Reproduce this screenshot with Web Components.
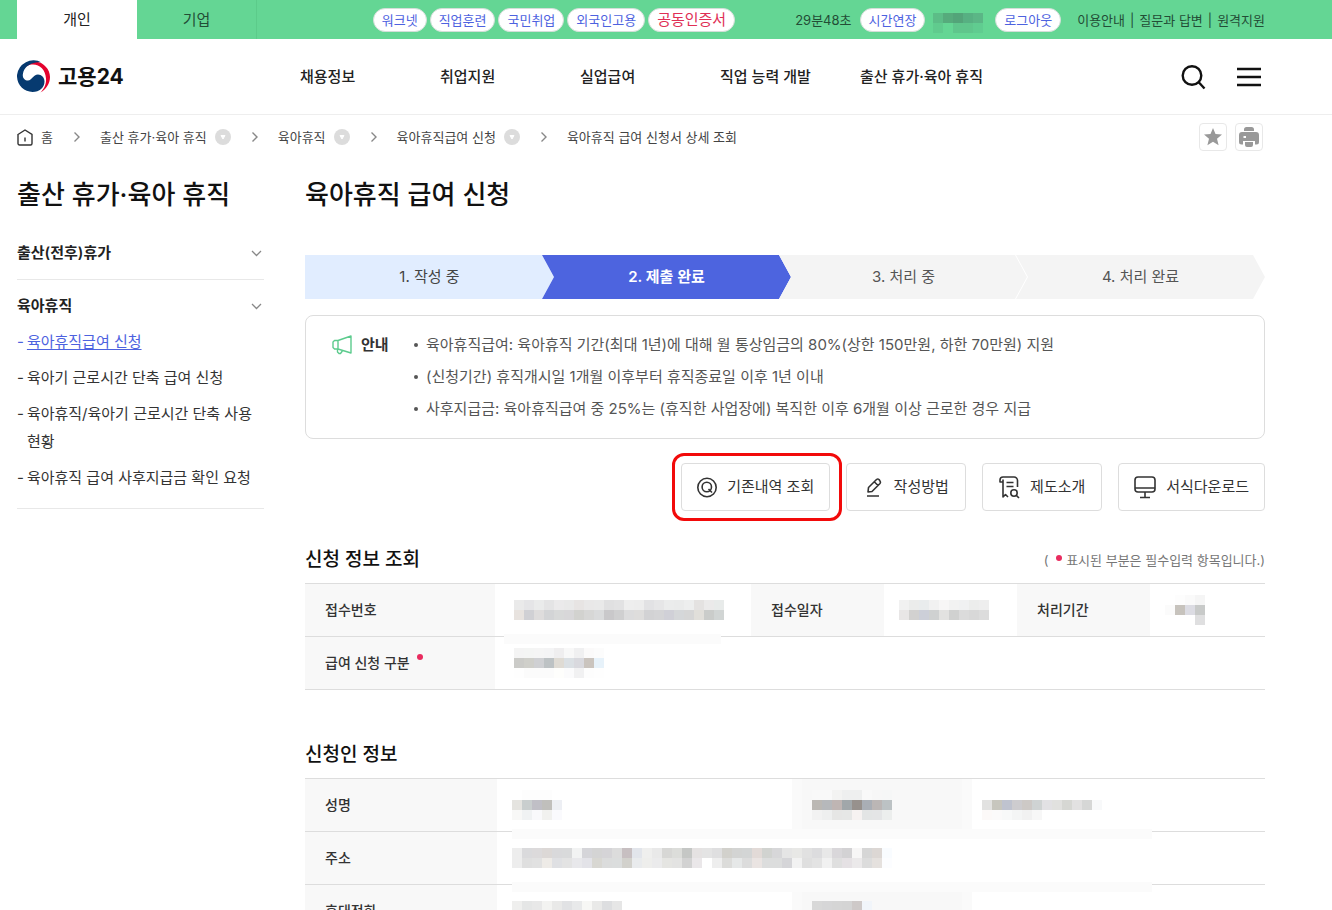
<!DOCTYPE html>
<html lang="ko">
<head>
<meta charset="utf-8">
<meta name="viewport" content="width=device-width, initial-scale=1">
<title>육아휴직 급여 신청 - 고용24</title>
<style>
  html, body { margin: 0; background: #fff; }
  body { font-family: Inter, "Noto Sans CJK KR", sans-serif; font-size: 15px; line-height: 20px; color: #333; }
</style>
</head>
<body>
<work-page></work-page>

<script>
const base = `
  *, *::before, *::after { box-sizing: border-box; }
  :host { display: block; box-sizing: border-box; }
  a { color: inherit; text-decoration: none; }
  button { font: inherit; color: inherit; cursor: pointer; }
  ul, ol { list-style: none; margin: 0; padding: 0; }
  h1, h2, h3, p { margin: 0; }
  svg { display: block; flex: none; }
`;

function define(name, css, html) {
  const tpl = document.createElement('template');
  tpl.innerHTML = `<style>${base}${css}</style>${html}`;
  customElements.define(name, class extends HTMLElement {
    constructor() {
      super();
      this.attachShadow({ mode: 'open' }).append(tpl.content.cloneNode(true));
    }
  });
}

/* Masked personal data: rows split by "/", one hex colour per 10px cell, "-" leaves a cell clear. */
customElements.define('masked-value', class extends HTMLElement {
  connectedCallback() {
    if (this.shadowRoot) return;
    const rows = this.getAttribute('cells').split('/').map(r => r.trim().split(/\s+/));
    const w = Math.max(...rows.map(r => r.length)) * 10, h = rows.length * 10;
    const rects = rows.map((r, y) => r.map((c, x) =>
      c === '-' ? '' : `<rect x="${x * 10}" y="${y * 10}" width="10" height="10" fill="#${c}"/>`).join('')).join('');
    this.attachShadow({ mode: 'open' }).innerHTML =
      `<style>:host{display:block}svg{display:block}</style>
       <svg width="${w}" height="${h}" shape-rendering="crispEdges" aria-hidden="true">${rects}</svg>`;
  }
});

define('pill-button', `
  :host { display: inline-block; color: #4d62df; font-size: 13px; }
  :host([alert]) { color: #e02f55; font-size: 15px; }
  button { display: block; height: 24px; padding: 0 8px; border: 1px solid #d5ded9; border-radius: 12px; background: #fff; line-height: 20px; white-space: nowrap; }
`, `<button type="button"><slot></slot></button>`);

define('top-bar', `
  :host { background: #64d694; color: #234d36; }
  .row { display: flex; justify-content: space-between; height: 39px; padding: 0 67px 0 17px; }
  .tabs { display: flex; }
  .tabs a { width: 120px; text-align: center; line-height: 40px; border-right: 1px solid #5ccb8a; }
  .tabs a.on { background: #fff; color: #222; border: 0; }
  .right, .sites, .util { display: flex; align-items: center; white-space: nowrap; font-size: 13px; }
  .sites { gap: 3px; margin-right: 60px; }
  .session { display: flex; align-items: center; gap: 8px; margin-right: 16px; }
  .session masked-value { margin: 7px 4px 0 0; }
  .util { gap: 5px; }
`, `
  <div class="row">
    <nav class="tabs"><a class="on" href="#">개인</a><a href="#">기업</a></nav>
    <div class="right">
      <div class="sites">
        <pill-button>워크넷</pill-button><pill-button>직업훈련</pill-button><pill-button>국민취업</pill-button><pill-button>외국인고용</pill-button><pill-button alert>공동인증서</pill-button>
      </div>
      <div class="session">
        <span class="time">29분48초</span><pill-button>시간연장</pill-button>
        <masked-value cells="5cbd87 56ab7c 53a479 57b082 5bb686/60cb8e 64d694 5fc68c 5fc68c 60cc90"></masked-value>
        <pill-button>로그아웃</pill-button>
      </div>
      <nav class="util"><a href="#">이용안내</a><span>|</span><a href="#">질문과 답변</a><span>|</span><a href="#">원격지원</a></nav>
    </div>
  </div>`);

define('site-header', `
  :host { border-bottom: 1px solid #eee; color: #222; }
  .row { display: flex; align-items: center; height: 75px; padding: 0 71px 0 17px; }
  .logo { display: flex; align-items: center; gap: 8px; width: 283px; font-size: 21px; font-weight: 700; color: #111; }
  nav { display: grid; grid-auto-flow: column; grid-auto-columns: 140px; flex: 1; font-weight: 500; white-space: nowrap; }
  .tools { display: flex; gap: 30px; }
  .tools button { padding: 0; border: 0; background: none; }
`, `
  <div class="row">
    <a class="logo" href="#">
      <svg width="33" height="33" viewBox="0 0 33 33" aria-hidden="true">
        <path d="M4 9C7 3 13 0.500 19 1.500c8 1.200 14 8 14 15.500 0 6.500-4 12.500-9.500 15.500 4-4 6-9 5.500-14C28.500 10 23 4.500 16 4.500 12 4.500 8 6.500 6 10Z" fill="#e4032e"/>
        <path d="M24.500 2.500A16.500 16.500 0 0 0 0 15c-.5 10 7 17 15.500 17C22.500 32 27.500 27.500 27.500 21.500c0-4-3-7-6.500-7-5 0-6 6-10 6-3.500 0-6-3-5-7C7 8 11 4.500 16 3.200c3-1 6-1.200 8.500-.7Z" fill="#063a70"/>
      </svg>
      <span>고용24</span>
    </a>
    <nav><a href="#">채용정보</a><a href="#">취업지원</a><a href="#">실업급여</a><a href="#">직업 능력 개발</a><a href="#">출산 휴가·육아 휴직</a></nav>
    <div class="tools">
      <button type="button" aria-label="검색"><svg width="26" height="26" viewBox="0 0 26 26" fill="none" stroke="#111" stroke-width="2.400"><circle cx="11" cy="11.500" r="9.300"/><path d="m17.500 18 6 6.500"/></svg></button>
      <button type="button" aria-label="전체메뉴"><svg width="24" height="26" viewBox="0 0 24 26" fill="none" stroke="#111" stroke-width="2.400"><path d="M0 5h24M0 13h24M0 21h24"/></svg></button>
    </div>
  </div>`);

define('crumb-item', `
  :host { display: flex; align-items: center; gap: 8px; }
  :host([home]) svg.go, :host([home]) button, :host([last]) button { display: none; }
  svg.go { margin: 0 11px 0 12px; }
  button { padding: 0; border: 0; width: 16px; height: 16px; border-radius: 50%; background: #dcdcdc; }
`, `
  <svg class="go" width="8" height="12" viewBox="0 0 8 12" fill="none" stroke="#888" stroke-width="1.400"><path d="m1.500 1.500 4.500 4.500-4.500 4.500"/></svg>
  <slot></slot>
  <button type="button" aria-label="하위 메뉴"><svg width="16" height="16" viewBox="0 0 16 16"><path d="M6 6.500h4L8 10Z" fill="#fff" stroke="#fff" stroke-linejoin="round"/></svg></button>`);

define('bread-crumb', `
  .row { display: flex; align-items: center; justify-content: space-between; height: 44px; padding: 0 69px 0 17px; font-size: 13px; color: #444; }
  .path { display: flex; align-items: center; gap: 8px; white-space: nowrap; }
  .tools { display: flex; gap: 8px; }
  .tools button { display: grid; place-items: center; width: 28px; height: 28px; padding: 0; border: 1px solid #e8e8e8; border-radius: 4px; background: #fff; }
`, `
  <div class="row">
    <nav class="path">
      <crumb-item home><svg width="16" height="17" viewBox="0 0 16 17" fill="none" stroke="#333" stroke-width="1.400"><path d="M1 5.500 8 1l7 4.500V14.500a1.500 1.500 0 0 1-1.500 1.500h-11A1.500 1.500 0 0 1 1 14.500ZM8 8.500V12.500"/></svg><a href="#">홈</a></crumb-item>
      <crumb-item><a href="#">출산 휴가·육아 휴직</a></crumb-item>
      <crumb-item><a href="#">육아휴직</a></crumb-item>
      <crumb-item><a href="#">육아휴직급여 신청</a></crumb-item>
      <crumb-item last><span>육아휴직 급여 신청서 상세 조회</span></crumb-item>
    </nav>
    <div class="tools">
      <button type="button" aria-label="즐겨찾기"><svg width="20" height="20" viewBox="0 0 20 20"><path d="m10 1 2.500 6 6.500.5-5 4.300 1.600 6.400L10 14.700l-5.600 3.500L6 11.800 1 7.500 7.500 7Z" fill="#999"/></svg></button>
      <button type="button" aria-label="인쇄"><svg width="20" height="20" viewBox="0 0 20 20"><path d="M5 4V2.500A2.500 2.500 0 0 1 7.500 0h5A2.500 2.500 0 0 1 15 2.500V4ZM3 5h14a3 3 0 0 1 3 3v7a2.500 2.500 0 0 1-2.500 2.500H16V14H4v3.500H2.500A2.500 2.500 0 0 1 0 15V8a3 3 0 0 1 3-3Zm1.500 4v2h2.500v-2ZM6 15h8v3a2 2 0 0 1-2 2H8a2 2 0 0 1-2-2Z" fill="#999" fill-rule="evenodd"/></svg></button>
    </div>
  </div>`);

define('menu-group', `
  :host { padding: 12px 0; border-bottom: 1px solid #e8e8e8; }
  h3 { display: flex; align-items: center; justify-content: space-between; padding-right: 2px; font-size: 15px; line-height: 28px; font-weight: 600; color: #222; }
`, `
  <h3><slot name="title"></slot><svg width="11" height="7" viewBox="0 0 11 7" fill="none" stroke="#888" stroke-width="1.300"><path d="m1 1 4.500 4.500L10 1"/></svg></h3>
  <slot></slot>`);

define('side-menu', `
  h2 { margin-bottom: 14px; font-size: 26px; line-height: 36px; font-weight: 500; color: #111; white-space: nowrap; }
  ul { display: grid; gap: 8px; padding: 8px 0 4px; line-height: 28px; }
  li { display: flex; gap: 3px; }
  li::before { content: "-"; }
  li.on { color: #4d62df; }
  li.on a { text-decoration: underline; text-underline-offset: 2px; }
`, `
  <h2>출산 휴가·육아 휴직</h2>
  <menu-group><span slot="title">출산(전후)휴가</span></menu-group>
  <menu-group><span slot="title">육아휴직</span>
    <ul>
      <li class="on"><a href="#">육아휴직급여 신청</a></li>
      <li><a href="#">육아기 근로시간 단축 급여 신청</a></li>
      <li><a href="#">육아휴직/육아기 근로시간 단축 사용 현황</a></li>
      <li><a href="#">육아휴직 급여 사후지급금 확인 요청</a></li>
    </ul>
  </menu-group>`);

define('step-bar', `
  ol { display: grid; grid-template-columns: repeat(4, 1fr); padding-right: 12px; }
  li { margin-right: -12px; height: 44px; line-height: 44px; text-align: center; color: #555; background: #f4f4f4;
       clip-path: polygon(0 0, calc(100% - 12px) 0, 100% 50%, calc(100% - 12px) 100%, 0 100%, 12px 50%); }
  li:first-child { background: #e1edff; color: #444; clip-path: polygon(0 0, calc(100% - 12px) 0, 100% 50%, calc(100% - 12px) 100%, 0 100%); }
  li.now { background: #4d64df; color: #fff; font-weight: 600; }
  li:nth-child(3) { clip-path: polygon(0 0, calc(100% - 13px) 0, calc(100% - 1px) 50%, calc(100% - 13px) 100%, 0 100%, 12px 50%); }
`, `<ol><li>1. 작성 중</li><li class="now" aria-current="step">2. 제출 완료</li><li>3. 처리 중</li><li>4. 처리 완료</li></ol>`);

define('notice-box', `
  :host { display: flex; padding: 13px 26px; border: 1px solid #ddd; border-radius: 8px; line-height: 32px; color: #555; }
  .head { display: flex; align-items: center; gap: 9px; height: 32px; width: 82px; font-weight: 600; color: #333; }
  ::slotted(ul) { list-style: none; margin: 0; padding: 0; }
`, `
  <div class="head"><svg width="20" height="20" viewBox="0 0 20 20" fill="none" stroke="#5ccb8d" stroke-width="1.400" stroke-linejoin="round"><path d="M6 5.500 19 1v17L6 14ZM6 5.500H2.500L1 7v5.500L2.500 14H6ZM5.500 14v3l1.500 1.500h1.500l1.500-2v-1"/></svg><slot name="title"></slot></div>
  <slot></slot>`);

define('tool-button', `
  :host { position: relative; }
  button { display: flex; align-items: center; justify-content: center; gap: 10px; min-width: 120px; height: 48px; padding: 0 15px; border: 1px solid #ddd; border-radius: 4px; background: #fff; color: #333; white-space: nowrap; }
  :host([highlight])::after { content: ""; position: absolute; inset: -10px -12px -10px -9px; border: 3px solid #f20a0a; border-radius: 12px; pointer-events: none; }
`, `<button type="button"><slot name="icon"></slot><slot></slot></button>`);

define('section-head', `
  :host { display: flex; align-items: center; justify-content: space-between; margin-bottom: 9px; }
  h2 { font-size: 19px; line-height: 28px; font-weight: 500; color: #111; }
  p { font-size: 13px; color: #777; }
`, `<h2><slot></slot></h2><p><slot name="note"></slot></p>`);

define('required-dot', `
  :host { display: inline-block; width: 6px; height: 6px; margin: 0 4px; border-radius: 50%; background: #e92c5f; vertical-align: 4px; }
  :host([raised]) { vertical-align: 8px; }
`, ``);

const tableCss = `
  table { width: 100%; table-layout: fixed; border-collapse: separate; border-spacing: 0; border-top: 1px solid #ddd; font-size: 14px; }
  th, td { position: relative; height: 53px; padding: 0 10px 0 15px; border-bottom: 1px solid #ddd; text-align: left; line-height: 20px; }
  th { padding: 0 0 0 20px; background: #f8f8f8; color: #333; font-weight: 500; }
  .veil { position: absolute; z-index: 1; left: 15px; top: calc(100% - 2px); height: 10px; background: #fbfbfb; }
`;

define('receipt-table', tableCss + `
  .lead { padding-left: 19px; }
  .lead .veil { left: 9px; width: 217px; }
`, `
  <table>
    <colgroup><col style="width:190px"><col><col style="width:133px"><col style="width:133px"><col style="width:133px"><col style="width:115px"></colgroup>
    <tr>
      <th scope="row">접수번호</th>
      <td class="lead"><masked-value cells="eaeaea e5e5e7 eaebeb e4e4e5 ebeaeb e9e9e9 e7e4e3 e9e8e8 e9e9e9 e0e0e1 e2e2e3 eeeeee ededed e2e2e4 e6e6e7 ebecec eaebeb edeeee e4e2e1 ebeaea e8ebea/e8e3df d0d0d4 dedcdc d3d4d6 d8d9d9 d8d7d9 d2d2cf d7d7d6 dadbdc c9c8ca cfcfd0 dcdcdd dedddc d2d2d4 d4d4d6 d0d0d7 d5d7d9 d6d6d6 e1dfda caccca d1d5d4"></masked-value><span class="veil"></span></td>
      <th scope="row">접수일자</th>
      <td><masked-value cells="f1f1f1 ebeceb e9eced f1f1f1 f7f6f6 f2f2f2 f0f1f2 ecedec eeeeee/e8e6e6 d2d1d0 cccfd8 cfd1d1 e2e2e0 d0d1d0 dbdbdb d8d8d8 dcdcdc"></masked-value></td>
      <th scope="row">처리기간</th>
      <td><masked-value cells="- fdfdfd fafafa f5f5f5/fbfbfb c7c3bd dcdce3 c8cac9/- - - dfdfe0"></masked-value></td>
    </tr>
    <tr>
      <th scope="row">급여 신청 구분 <required-dot raised></required-dot></th>
      <td class="lead" colspan="5"><masked-value cells="f4f4f4 f4f5f4 f5f5f5 f4f4f5 efeeef f8f8f8 f0f0f1 fbfafa fcfcfc/cbcbc8 cfcfca cfd0d3 bdc2c4 dfdbd4 dbe0e4 d9d9de cac4be e7f2fa/fefefe fbfbfb fbfbfb fbfbfb fefefc fbfbfc f1f1f2 fdfdfd fefefe"></masked-value></td>
    </tr>
  </table>`);

define('applicant-table', tableCss + `
  .veil { width: 640px; }
  th.masked { background: linear-gradient(90deg, #fafafa 10px, #f8f8f8 10px, #f8f8f8 170px, #fafafa 170px); }
  .masked + td { padding-left: 10px; }
`, `
  <table>
    <colgroup><col style="width:192px"><col><col style="width:180px"><col style="width:293px"></colgroup>
    <tr>
      <th scope="row">성명</th>
      <td><masked-value cells="- fdfdfd fdfdfd fdfdfd -/e5e4e0 c9cece c0bfc6 c0bfbc edeff4/f8f8f7 f0f2f3 f9f9fb f1f1ef fafafd"></masked-value><span class="veil"></span></td>
      <th class="masked" scope="row"><masked-value cells="f9f9f9 f9f9f9 f3f3f2 eeefef eeefef f9f9f9 f7f7f7 f6f7f7/bbb8b4 b6b8bb bfb5b3 a1a7aa 97918d a9aeb5 bbb6b5 bcc2c4/f2f2f2 eeefef e6e6e5 e6e7e6 f6f2f1 e3e5e5 e4e5e6 eceeed"></masked-value></th>
      <td><masked-value cells="-/e2e2e1 c7c6be bfc3cf cdcccf cdc9c6 cfd3d3 e2e1e4 e1e1df d6d7d3 e2e1e1 d6d7d6 f8f9fa/fcf9f8 fbfafa f8f9f9 f4f5f5 f1f1f1 f7f7f7"></masked-value></td>
    </tr>
    <tr>
      <th scope="row">주소</th>
      <td colspan="3"><masked-value cells="ededed dadadc dcdadb dcd8d6 d9d9db d9dadb f2f3f3 d5d5d9 d4d4d4 d5d4d7 dcdcdc c7bfc1 e2e5eb efefee e9e9e9 d7d7d5 dcddda c5c7c5 e5e2e2 e4e4e4 dfdfe0 d2d1cc d3d4d3 d3d5d5 e2dad7 d1d3d0 d7d7d9 e5e5e5 e8e8e6 e1e1e1 dcdcde e8e8e8 d9d7da d3d2d4 f7f6f6 d6d6d6 dcd7d4 f9fcff/ededed dfdfdf e1e1e1 eeebe7 dfe0e3 e3e3e3 e8e8eb e3e3e8 d8d7d2 dbdcdc dbdddd d2d1cc e9ebed eeeeec ebebec e5e5e2 e3e3e2 d2d2d2 eae7e9 ffffff eeeeee dcdcda e6e8e8 dcdcdc eae4e2 dcdddd dcdddd d5d5d8 f2f2f2 dfdfdf e3e3e3 f1f1f1 dfdfdf e5e1e4 ebe9ea dcdcdc e5e1de fcfdff"></masked-value><span class="veil"></span></td>
    </tr>
    <tr>
      <th scope="row">휴대전화</th>
      <td><masked-value cells="efefee e5e6e6 e8e8e8 f3f3f1 e9e9e8 e1e2e4 e8e9ea f7f7f5 e9e9e8 dddee0 e6e6e6/c9c9c9 d0d0d2 cfcfcf dddddb d2d2d0 c8c9cc d0d1d3 e3e3e0 d2d2d0 c5c6c9 cecece"></masked-value></td>
      <th class="masked" scope="row"><masked-value cells="d8d8d8 d6d6d7 d5d5d5 d4d4d4 cec9c8 f1f5fa/97989d b5b5b2 b0b0b0 a6a8b0 b5aaa7 e0e6ee"></masked-value></th>
      <td></td>
    </tr>
  </table>`);

define('work-page', `
  .body { display: grid; grid-template-columns: 247px minmax(0, 1fr); column-gap: 41px; align-items: start; padding: 18px 67px 0 17px; }
  h1 { margin-bottom: 42px; font-size: 26px; line-height: 36px; font-weight: 500; color: #111; }
  notice-box { margin: 16px 0 24px; }
  .guide li { display: flex; gap: 8px; }
  .guide li::before { content: ""; width: 4px; height: 4px; margin-top: 14px; border-radius: 50%; background: #555; }
  .actions { display: flex; justify-content: flex-end; gap: 16px; margin-bottom: 35px; }
  receipt-table { margin-bottom: 51px; }
`, `
  <top-bar></top-bar>
  <site-header></site-header>
  <bread-crumb></bread-crumb>
  <div class="body">
    <side-menu></side-menu>
    <main>
      <h1>육아휴직 급여 신청</h1>
      <step-bar></step-bar>
      <notice-box><span slot="title">안내</span>
        <ul class="guide">
          <li>육아휴직급여: 육아휴직 기간(최대 1년)에 대해 월 통상임금의 80%(상한 150만원, 하한 70만원) 지원</li>
          <li>(신청기간) 휴직개시일 1개월 이후부터 휴직종료일 이후 1년 이내</li>
          <li>사후지급금: 육아휴직급여 중 25%는 (휴직한 사업장에) 복직한 이후 6개월 이상 근로한 경우 지급</li>
        </ul>
      </notice-box>
      <div class="actions">
        <tool-button highlight><svg slot="icon" width="20" height="21" viewBox="0 0 20 21" fill="none" stroke="#333" stroke-width="1.600"><circle cx="10" cy="10.500" r="9.200"/><circle cx="9.800" cy="10" r="4.700"/><path d="m11.500 12 3.500 3.500"/></svg>기존내역 조회</tool-button>
        <tool-button><svg slot="icon" width="20" height="20" viewBox="0 0 20 20" fill="none" stroke="#333" stroke-width="1.600" stroke-linejoin="round"><path d="m4 15 .5-4.500 8-8a2 2 0 0 1 2.500 0L16 4a2 2 0 0 1 0 2.500l-8 8ZM10.500 5l3.500 3.500M3 19h12"/></svg>작성방법</tool-button>
        <tool-button><svg slot="icon" width="21" height="23" viewBox="0 0 21 23" fill="none" stroke="#333" stroke-width="1.600" stroke-linejoin="round"><path d="M18.500 11V4.500A3.500 3.500 0 0 0 15 1H4a3 3 0 0 0-3 3v2h3M4 3.500V21l2.500-2.500L9 21M7.500 6.500H14.500M7.500 10.500H14.500"/><circle cx="15" cy="17" r="3.200"/><path d="m17.500 19.500 2.500 2.500"/></svg>제도소개</tool-button>
        <tool-button><svg slot="icon" width="22" height="23" viewBox="0 0 22 23" fill="none" stroke="#333" stroke-width="1.600"><rect x="1" y="1" width="20" height="15" rx="3"/><path d="M1 12h20M11 16v5.500M6 21.500h10"/></svg>서식다운로드</tool-button>
      </div>
      <section-head>신청 정보 조회<span slot="note">( <required-dot></required-dot>표시된 부분은 필수입력 항목입니다.)</span></section-head>
      <receipt-table></receipt-table>
      <section-head>신청인 정보</section-head>
      <applicant-table></applicant-table>
    </main>
  </div>`);
</script>
</body>
</html>
